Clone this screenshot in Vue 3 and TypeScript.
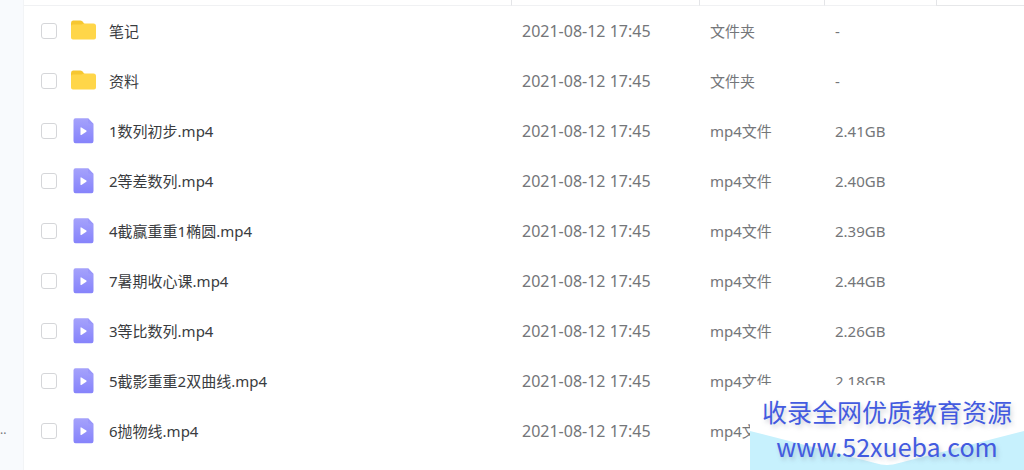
<script setup lang="ts">
import { ref } from 'vue'

interface FileEntry {
  name: string
  kind: 'folder' | 'video'
  size: string
}

const modified = '2021-08-12 17:45'
const files: FileEntry[] = [
  { name: '笔记', kind: 'folder', size: '-' },
  { name: '资料', kind: 'folder', size: '-' },
  { name: '1数列初步.mp4', kind: 'video', size: '2.41GB' },
  { name: '2等差数列.mp4', kind: 'video', size: '2.40GB' },
  { name: '4截赢重重1椭圆.mp4', kind: 'video', size: '2.39GB' },
  { name: '7暑期收心课.mp4', kind: 'video', size: '2.44GB' },
  { name: '3等比数列.mp4', kind: 'video', size: '2.26GB' },
  { name: '5截影重重2双曲线.mp4', kind: 'video', size: '2.18GB' },
  { name: '6抛物线.mp4', kind: 'video', size: '' },
]
const selected = ref<string[]>([])
</script>

<template>
  <div class="page">
    <aside class="sidebar"><span>..</span></aside>
    <main class="content">
      <table class="files">
        <colgroup>
          <col />
          <col class="col-date" />
          <col class="col-type" />
          <col class="col-size" />
          <col class="col-rest" />
        </colgroup>
        <thead>
          <tr>
            <th></th>
            <th></th>
            <th></th>
            <th></th>
            <th class="rest"></th>
          </tr>
        </thead>
        <tbody>
          <tr v-for="(file, i) in files" :key="file.name">
            <td>
              <div class="name">
                <input :id="`file-${i}`" v-model="selected" type="checkbox" :value="file.name" />
                <svg v-if="file.kind === 'folder'" class="icon" viewBox="0 0 26 26" aria-hidden="true">
                  <path d="M1 5Q1 2.500 3 2.500H10Q11.500 2.500 12.500 3.500L15 6.500V12H1Z" fill="#f6c731" />
                  <path d="M1 8.500Q1 6.500 3 6.500H11Q12.500 6.500 13.500 5.500H23.500Q26 5.500 26 8V19.500Q26 21.500 24 21.500H3Q1 21.500 1 19.500Z" fill="#ffd649" />
                </svg>
                <svg v-else class="icon" viewBox="0 0 26 26" aria-hidden="true">
                  <defs>
                    <linearGradient :id="`video-${i}`" x1="0" y1="0" x2="0" y2="1">
                      <stop offset="0" stop-color="#a5a2fb" />
                      <stop offset="1" stop-color="#8683fb" />
                    </linearGradient>
                  </defs>
                  <path d="M5.500 .3H18L23.500 6V23Q23.500 25.300 21.500 25.300H5.500Q3.500 25.300 3.500 23V2.500Q3.500 .3 5.500 .3Z" :fill="`url(#video-${i})`" />
                  <path d="M18 .3L23.500 6H20Q18 6 18 4Z" fill="#9a97fa" />
                  <path d="M10.500 10Q10.500 9 11.400 9.500L16.300 12.600Q17 13.200 16.300 13.800L11.400 16.900Q10.500 17.400 10.500 16.400Z" fill="#fff" />
                </svg>
                <label :for="`file-${i}`">{{ file.name }}</label>
              </div>
            </td>
            <td class="date">{{ modified }}</td>
            <td>{{ file.kind === 'folder' ? '文件夹' : 'mp4文件' }}</td>
            <td>{{ file.size }}</td>
            <td></td>
          </tr>
        </tbody>
      </table>
    </main>
    <div class="banner">
      <svg class="banner-shape" viewBox="0 0 274 85" preserveAspectRatio="none" aria-hidden="true">
        <path d="M0 46L125 78Q137 82 149 78L274 46V85H0Z" fill="#c7f1fd" />
      </svg>
      <p>收录全网优质教育资源</p>
      <p>www.52xueba.com</p>
    </div>
  </div>
</template>

<style>
body {
  margin: 0;
  background: #fff;
}
</style>

<style scoped>
.page {
  position: relative;
  display: flex;
  min-height: 100vh;
  overflow: hidden;
  box-sizing: border-box;
  font-family: "Noto Sans", "Noto Sans CJK SC", sans-serif;
  font-size: 15px;
  line-height: 20px;
  color: #747679;
}
.sidebar {
  display: flex;
  align-items: flex-end;
  justify-content: flex-start;
  flex: 0 0 24px;
  box-sizing: border-box;
  padding-bottom: 30px;
  font-size: 12px;
  background: #f8fafd;
  border-right: 1px solid #f2f4f6;
}
.content {
  flex: 1;
  min-width: 0;
}
.files {
  width: 100%;
  table-layout: fixed;
  border-collapse: separate;
  border-spacing: 0;
}
.col-date {
  width: 188px;
}
.col-type {
  width: 125px;
}
.col-size {
  width: 112px;
}
.col-rest {
  width: 88px;
}
th {
  height: 5px;
  padding: 0;
  box-sizing: content-box;
  border-bottom: 1px solid #f0f1f3;
}
th + th {
  border-left: 1px solid #e4e5e8;
}
th.rest {
  border-bottom-color: #e6e7e9;
}
td {
  height: 50px;
  padding: 0 0 0 11px;
  box-sizing: border-box;
  white-space: nowrap;
}
td:first-child {
  padding-left: 17px;
}
.date {
  font-size: 16px;
}
.name {
  display: flex;
  align-items: center;
  color: #3a3c40;
}
input {
  appearance: none;
  width: 16px;
  height: 16px;
  margin: 0 13px 0 0;
  border: 1px solid #d5d6d9;
  border-radius: 3px;
  background: #fff;
}
input:checked {
  background: #8683fb;
}
.icon {
  flex: none;
  width: 26px;
  height: 26px;
  margin-right: 13px;
}
.banner {
  position: absolute;
  right: 0;
  bottom: 0;
  width: 274px;
  height: 85px;
  box-sizing: border-box;
  padding-top: 9px;
  background: #fff;
  color: #435be0;
  font-family: "Noto Sans CJK SC", sans-serif;
  font-size: 25px;
  line-height: 35px;
  text-align: center;
  text-shadow: 2px 3px 4px rgba(120, 130, 150, 0.35);
}
.banner p {
  position: relative;
  margin: 0;
}
.banner-shape {
  position: absolute;
  left: 0;
  top: 0;
  width: 100%;
  height: 100%;
}
</style>
